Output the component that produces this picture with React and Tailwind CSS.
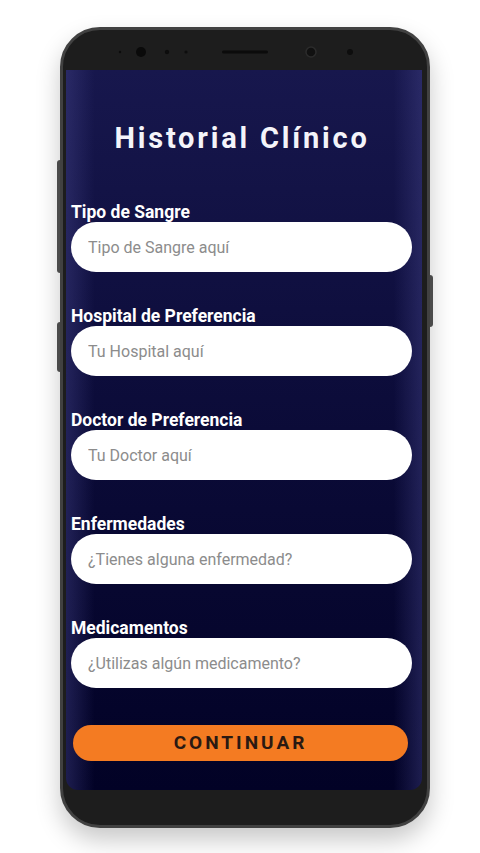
import React from 'react';

const fields = [
    { label: 'Tipo de Sangre', placeholder: 'Tipo de Sangre aquí' },
    { label: 'Hospital de Preferencia', placeholder: 'Tu Hospital aquí' },
    { label: 'Doctor de Preferencia', placeholder: 'Tu Doctor aquí' },
    { label: 'Enfermedades', placeholder: '¿Tienes alguna enfermedad?' },
    { label: 'Medicamentos', placeholder: '¿Utilizas algún medicamento?' },
];

const Bezel = () => (
    <svg width="364" height="40" viewBox="0 0 364 40" className="block">
        <circle cx="57" cy="22" r="1.2" fill="#0d0d0d" />
        <circle cx="78" cy="22" r="5" fill="#0a0a0a" />
        <circle cx="104" cy="22" r="2.2" fill="#0d0d0d" />
        <circle cx="123" cy="22" r="1.6" fill="#0d0d0d" />
        <rect x="159" y="20.5" width="46" height="3" rx="1.5" fill="#0b0b0b" />
        <circle cx="248" cy="22" r="5" fill="#111" stroke="#2c2c2c" strokeWidth="1.5" />
        <circle cx="287" cy="22" r="3" fill="#0d0d0d" />
    </svg>
);

const Field = ({ label, placeholder }) => (
    <div className="flex flex-col">
        <label className="text-[17.5px] leading-[20px] font-bold text-white pl-[5px]">{label}</label>
        <input
            className="h-[50px] ml-[5px] w-[341px] rounded-full bg-white px-[17px] text-[16px] text-gray-800 placeholder:text-[#8c8c8c] outline-none"
            placeholder={placeholder}
        />
    </div>
);

export default function App() {
    return (
        <div className="w-[480px] h-[853px] bg-white pl-[60px] pt-[27px] font-['Roboto',sans-serif]">
            <div className="relative w-[370px] h-[801px] rounded-[40px] bg-[#1d1d1d] border-[3px] border-[#414141] shadow-[0_12px_24px_rgba(0,0,0,0.22)]">
                {/* side buttons */}
                <div className="absolute left-[-6px] top-[130px] w-[3px] h-[113px] rounded-l bg-[#4a4a4a]" />
                <div className="absolute left-[-6px] top-[292px] w-[3px] h-[50px] rounded-l bg-[#4a4a4a]" />
                <div className="absolute right-[-6px] top-[245px] w-[3px] h-[52px] rounded-r bg-[#4a4a4a]" />

                <Bezel />

                <div className="ml-[3px] w-[356px] h-[720px] rounded-b-[12px] bg-[linear-gradient(to_right,rgba(70,70,140,0.4),rgba(0,0,0,0)_8%,rgba(0,0,0,0)_92%,rgba(70,70,140,0.4)),linear-gradient(to_bottom,#17174d,#0b0b38_50%,#020226)] pt-[50px] flex flex-col">
                    <h1 className="text-center text-[29px] leading-[36px] font-bold text-[#f4f4fa] tracking-[2.8px] pr-[4px]">
                        Historial Clínico
                    </h1>
                    <div className="mt-[46px] flex flex-col gap-[34px]">
                        {fields.map((f) => (
                            <Field key={f.label} {...f} />
                        ))}
                    </div>
                    <button className="mt-[37px] ml-[7px] w-[335px] h-[36px] rounded-full bg-[#f47b22] text-[19px] font-bold tracking-[3px] text-[#2a1912]">
                        CONTINUAR
                    </button>
                </div>
            </div>
        </div>
    );
}
